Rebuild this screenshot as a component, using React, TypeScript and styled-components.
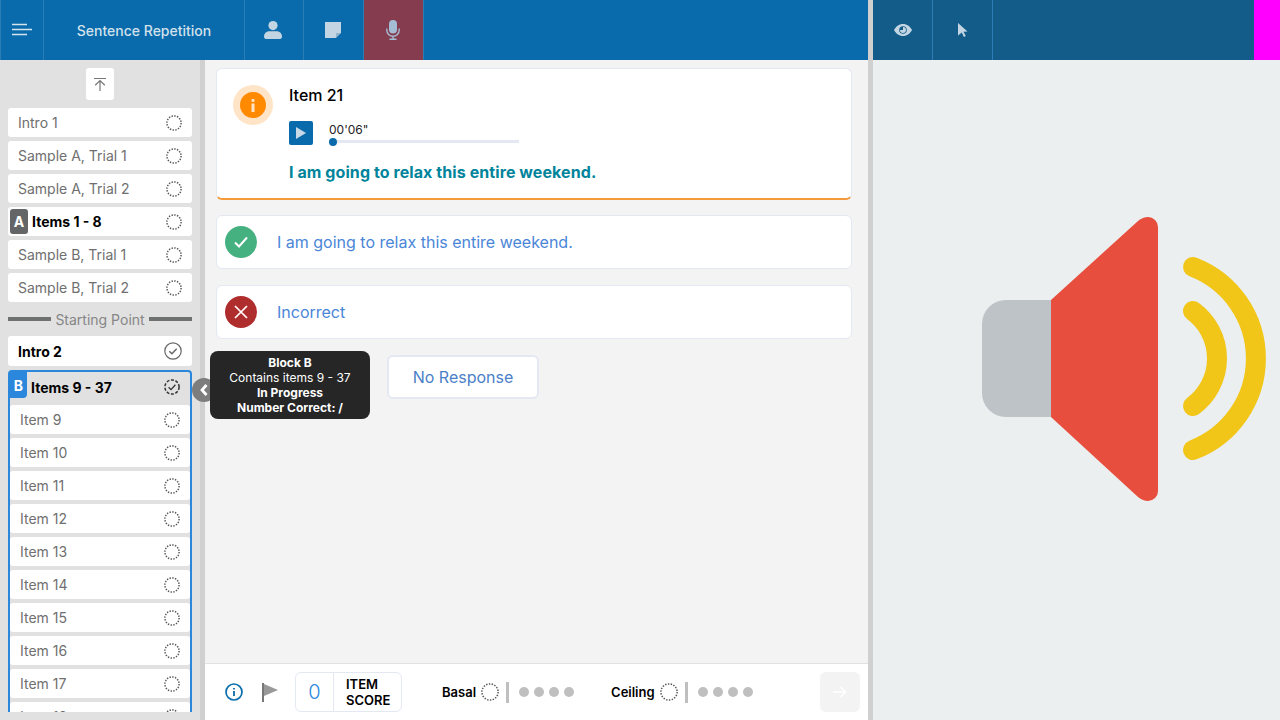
import React from 'react';
import styled, {createGlobalStyle} from 'styled-components';

const GlobalStyle = createGlobalStyle`
  html, body {
    margin: 0;
    padding: 0;
    height: 100%;
    overflow: hidden;
  }
  body {
    font-family: Inter, "Noto Sans", sans-serif;
  }
  #root {
    height: 100%;
  }
`;

const Ring = ({checked}: {checked?: 'done' | 'progress'}) => {
  if (checked === 'done') {
    return (
      <svg width="18" height="18" viewBox="0 0 18 18" fill="none">
        <circle cx="9" cy="9" r="8.2" stroke="#666" strokeWidth="1.2" />
        <path d="M5.3 9.2l2.6 2.6 4.8-5" stroke="#666" strokeWidth="1.4" />
      </svg>
    );
  }
  return (
    <svg width="16" height="16" viewBox="0 0 16 16" fill="none">
      <circle
        cx="8"
        cy="8"
        r="7.1"
        stroke={checked ? '#333' : '#555'}
        strokeWidth="1.5"
        strokeDasharray={checked ? '3 1.6' : '1.4 1.39'}
      />
      {checked && (
        <path d="M4.6 8.2l2.4 2.4 4.4-4.8" stroke="#333" strokeWidth="1.3" />
      )}
    </svg>
  );
};

const LargeRing = () => (
  <BigRing>
    <svg width="18" height="18" viewBox="0 0 18 18" fill="none">
      <circle
        cx="9"
        cy="9"
        r="8.1"
        stroke="#555"
        strokeWidth="1.5"
        strokeDasharray="1.4 1.43"
      />
    </svg>
  </BigRing>
);

export default function App() {
  const topRows = ['Intro 1', 'Sample A, Trial 1', 'Sample A, Trial 2'];
  const blockRows = ['Sample B, Trial 1', 'Sample B, Trial 2'];
  const items = [9, 10, 11, 12, 13, 14, 15, 16, 17, 18, 19];

  return (
    <Page>
      <GlobalStyle />
      <LeftPane>
        <TopBar>
          <MenuCell>
            <svg width="20" height="14" viewBox="0 0 20 14" fill="none">
              <path d="M0 1.5h15M0 6.5h20M0 11.5h15" stroke="#d5e3ee" strokeWidth="1.6" />
            </svg>
          </MenuCell>
          <TitleCell>Sentence Repetition</TitleCell>
          <IconCell $width={59}>
            <svg width="18" height="18" viewBox="0 0 18 18" fill="#c3d5e3">
              <circle cx="9" cy="4.6" r="4.6" />
              <path d="M0 15.5C0 12 3 10.2 5.5 10.2h7c2.5 0 5.500 1.800 5.500 5.300 0 1.400-.8 2.500-2 2.500H2c-1.200 0-2-1.100-2-2.500z" />
            </svg>
          </IconCell>
          <IconCell $width={60}>
            <svg width="16" height="16" viewBox="0 0 16 16">
              <path d="M0 0h16v10.500L10.500 16H0z" fill="#c3d5e3" />
              <path d="M11 16v-4a1 1 0 0 1 1-1h4z" fill="#8fb4cf" />
            </svg>
          </IconCell>
          <IconCell $width={60} $active>
            <svg width="14" height="20" viewBox="0 0 14 20" fill="none">
              <rect x="3" y="0" width="8" height="13.500" rx="4" fill="#a4bcd4" />
              <path d="M.8 8.500v1.500a6.200 6.200 0 0 0 12.400 0V8.500M7 16.200V19M3.500 19.300h7" stroke="#a4bcd4" strokeWidth="1.400" />
            </svg>
          </IconCell>
        </TopBar>
        <Body>
          <Sidebar>
            <Scroller>
              <ToTop>
                <svg width="14" height="14" viewBox="0 0 14 14" fill="none">
                  <path d="M1 1.500h12M7 14V3.500M2.200 8.200L7 3.500l4.800 4.700" stroke="#777" strokeWidth="1.200" />
                </svg>
              </ToTop>
              <RowList>
                {topRows.map(label => (
                  <Row key={label}>
                    <RowLabel>{label}</RowLabel>
                    <Ring />
                  </Row>
                ))}
                <Row $badged>
                  <BlockBadge>A</BlockBadge>
                  <RowLabel $strong>Items 1 - 8</RowLabel>
                  <Ring />
                </Row>
                {blockRows.map(label => (
                  <Row key={label}>
                    <RowLabel>{label}</RowLabel>
                    <Ring />
                  </Row>
                ))}
              </RowList>
              <Divider>
                <DividerLine />
                <span>Starting Point</span>
                <DividerLine />
              </Divider>
              <Row $tall>
                <RowLabel $strong>Intro 2</RowLabel>
                <Ring checked="done" />
              </Row>
              <Group>
                <GroupHeader>
                  <GroupBadge>B</GroupBadge>
                  <RowLabel $strong>Items 9 - 37</RowLabel>
                  <Ring checked="progress" />
                </GroupHeader>
                <RowList>
                  {items.map(n => (
                    <Row key={n}>
                      <RowLabel>Item {n}</RowLabel>
                      <Ring />
                    </Row>
                  ))}
                </RowList>
              </Group>
            </Scroller>
          </Sidebar>
          <Main>
            <Content>
              <Card>
                <InfoHalo>
                  <InfoDot>
                    <svg width="4" height="13" viewBox="0 0 4 13" fill="#ffe4c8">
                      <rect x="0.500" y="0" width="3" height="3" rx="1" />
                      <rect x="0.500" y="4.500" width="3" height="8.500" rx="0.500" />
                    </svg>
                  </InfoDot>
                </InfoHalo>
                <CardBody>
                  <ItemTitle>Item 21</ItemTitle>
                  <Player>
                    <PlayButton>
                      <svg width="10" height="12" viewBox="0 0 10 12" fill="#c9d8e6">
                        <path d="M0 0l10 6-10 6z" />
                      </svg>
                    </PlayButton>
                    <Timeline>
                      <TimeText>00'06"</TimeText>
                      <Track>
                        <Knob />
                      </Track>
                    </Timeline>
                  </Player>
                  <Sentence>I am going to relax this entire weekend.</Sentence>
                </CardBody>
              </Card>
              <ResponseList>
                <ResponseRow>
                  <ResponseIcon $color="#46b180">
                    <svg width="14" height="12" viewBox="0 0 14 12" fill="none">
                      <path d="M1 6.500l4 4 8-9" stroke="#fff" strokeWidth="2" />
                    </svg>
                  </ResponseIcon>
                  <ResponseText>I am going to relax this entire weekend.</ResponseText>
                </ResponseRow>
                <ResponseRow>
                  <ResponseIcon $color="#b02d2d">
                    <svg width="14" height="14" viewBox="0 0 14 14" fill="none">
                      <path d="M1 1l12 12M13 1L1 13" stroke="#fff" strokeWidth="1.700" />
                    </svg>
                  </ResponseIcon>
                  <ResponseText>Incorrect</ResponseText>
                </ResponseRow>
                <NoResponse>No Response</NoResponse>
              </ResponseList>
            </Content>
            <Footer>
              <svg width="18" height="18" viewBox="0 0 18 18" fill="none">
                <circle cx="9" cy="9" r="8" stroke="#0b6dab" strokeWidth="1.700" />
                <path d="M9 8v5M9 5v1.600" stroke="#0b6dab" strokeWidth="1.800" />
              </svg>
              <FlagIcon width="16" height="19" viewBox="0 0 16 19">
                <rect x="0" y="0" width="2" height="19" fill="#777" />
                <path d="M2 1l14 6-14 6z" fill="#999" />
              </FlagIcon>
              <ScoreBox>
                <ScoreValue>0</ScoreValue>
                <ScoreLabel>
                  ITEM
                  <br />
                  SCORE
                </ScoreLabel>
              </ScoreBox>
              <Meter $left={40}>
                <MeterLabel>Basal</MeterLabel>
                <LargeRing />
                <MeterBar />
                <Dots>
                  {[0, 1, 2, 3].map(n => (
                    <Dot key={n} />
                  ))}
                </Dots>
              </Meter>
              <Meter $left={37}>
                <MeterLabel>Ceiling</MeterLabel>
                <LargeRing />
                <MeterBar />
                <Dots>
                  {[0, 1, 2, 3].map(n => (
                    <Dot key={n} />
                  ))}
                </Dots>
              </Meter>
              <NextButton>
                <svg width="14" height="12" viewBox="0 0 14 12" fill="none">
                  <path d="M0 6h12.500M7.500 1l5 5-5 5" stroke="#fff" strokeWidth="1.400" />
                </svg>
              </NextButton>
            </Footer>
          </Main>
          <Handle>
            <svg width="8" height="12" viewBox="0 0 8 12" fill="none">
              <path d="M6.500 1L2 6l4.500 5" stroke="#fff" strokeWidth="2.800" />
            </svg>
          </Handle>
          <Tooltip>
            <strong>Block B</strong>
            <span>Contains items 9 - 37</span>
            <strong>In Progress</strong>
            <strong>Number Correct: /</strong>
          </Tooltip>
        </Body>
      </LeftPane>
      <Splitter />
      <RightPane>
        <RightBar>
          <RightCell>
            <svg width="18" height="12" viewBox="0 0 18 12">
              <path d="M9 0c4 0 7.300 2.600 9 6-1.700 3.400-5 6-9 6s-7.300-2.600-9-6c1.700-3.400 5-6 9-6z" fill="#c3d5e3" />
              <circle cx="9" cy="6" r="3.800" fill="#135c8a" />
              <path d="M9 3a3 3 0 1 1-3 3h3z" fill="#c3d5e3" />
            </svg>
          </RightCell>
          <RightCell>
            <svg width="10" height="14" viewBox="0 0 10 14" fill="#c3d5e3">
              <path d="M0 0l9.500 8.500-4 .2 2.300 4.200-1.900 1-2.100-4.300L0 12.500z" />
            </svg>
          </RightCell>
          <Magenta />
        </RightBar>
        <Stage>
          <svg width="320" height="320" viewBox="0 0 320 320" fill="none">
            <path d="M91 100H46a24 24 0 0 0-24 24v69a24 24 0 0 0 24 24h45z" fill="#bdc3c7" />
            <path d="M91 100l87-79q5-4 10-4a10 10 0 0 1 10 10v264a10 10 0 0 1-10 10q-5 0-10-4l-87-80z" fill="#e74e3d" />
            <path d="M233 67a98 98 0 0 1 0 183M233 111a59 59 0 0 1 0 95" stroke="#f1c618" strokeWidth="20" strokeLinecap="round" />
          </svg>
        </Stage>
      </RightPane>
    </Page>
  );
}

const Page = styled.div`
  display: flex;
  width: 1280px;
  height: 720px;
  overflow: hidden;
  background: #f3f3f3;
`;

const LeftPane = styled.div`
  display: flex;
  flex-direction: column;
  width: 868px;
  flex: none;
`;

const TopBar = styled.div`
  display: flex;
  height: 60px;
  flex: none;
  background: #096bab;
`;

const MenuCell = styled.div`
  display: flex;
  align-items: center;
  justify-content: center;
  width: 44px;
  box-sizing: border-box;
  border-left: 1px solid #2a7db5;
  border-right: 1px solid #2a7db5;
`;

const TitleCell = styled.div`
  display: flex;
  align-items: center;
  justify-content: center;
  width: 201px;
  box-sizing: border-box;
  border-right: 1px solid #2a7db5;
  color: #d2e1ec;
  font-size: 14px;
  font-weight: 500;
`;

const IconCell = styled.div<{$active?: boolean; $width: number}>`
  display: flex;
  align-items: center;
  justify-content: center;
  width: ${({$width}) => $width}px;
  box-sizing: border-box;
  padding-right: 2px;
  background: ${({$active}) => ($active ? '#853c4e' : 'transparent')};
  border-right: 1px solid #2a7db5;
`;

const Body = styled.div`
  position: relative;
  display: flex;
  flex: 1;
  min-height: 0;
`;

const Sidebar = styled.div`
  width: 200px;
  flex: none;
  padding-bottom: 8px;
  box-sizing: content-box;
  height: 652px;
  background: #e1e1e1;
  border-right: 5px solid #d0d0d0;
`;

const Scroller = styled.div`
  height: 100%;
  box-sizing: border-box;
  padding: 8px 8px 0;
  overflow: hidden;
`;

const ToTop = styled.div`
  display: flex;
  align-items: center;
  justify-content: center;
  width: 28px;
  height: 32px;
  margin: 0 auto 8px;
  background: #fff;
  border-radius: 3px;
`;

const RowList = styled.div`
  display: flex;
  flex-direction: column;
  gap: 4px;
`;

const Row = styled.div<{$badged?: boolean; $tall?: boolean}>`
  display: flex;
  align-items: center;
  gap: 4px;
  height: ${({$tall}) => ($tall ? 30 : 29)}px;
  flex: none;
  padding: 0 10px 0 ${({$badged}) => ($badged ? 2 : 10)}px;
  background: #fff;
  border-radius: 3px;
`;

const RowLabel = styled.span<{$strong?: boolean}>`
  flex: 1;
  color: ${({$strong}) => ($strong ? '#000' : '#6f6f6f')};
  font-size: 14px;
  font-weight: ${({$strong}) => ($strong ? 700 : 400)};
  white-space: nowrap;
`;

const BlockBadge = styled.span`
  display: flex;
  align-items: center;
  justify-content: center;
  width: 18px;
  height: 25px;
  background: #636566;
  border-radius: 3px;
  color: #fff;
  font-size: 14px;
  font-weight: 700;
`;

const Divider = styled.div`
  display: flex;
  align-items: center;
  gap: 4px;
  height: 34px;
  color: #868686;
  font-size: 14px;
  white-space: nowrap;
`;

const DividerLine = styled.i`
  flex: 1;
  height: 4px;
  background: #6f7170;
`;

const Group = styled.div`
  margin-top: 4px;
  border: 2px solid #2a87db;
  border-radius: 4px 4px 0 0;
  background: #e1e1e1;
`;

const GroupHeader = styled.div`
  display: flex;
  align-items: center;
  gap: 4px;
  height: 33px;
  box-sizing: border-box;
  padding: 0 10px 3px 0;
`;

const GroupBadge = styled.span`
  display: flex;
  align-items: center;
  justify-content: center;
  align-self: flex-start;
  width: 17px;
  height: 26px;
  background: #2a87db;
  border-radius: 0 0 4px 0;
  color: #fff;
  font-size: 14px;
  font-weight: 700;
`;

const Main = styled.div`
  display: flex;
  flex-direction: column;
  flex: 1;
  min-width: 0;
`;

const Content = styled.div`
  flex: 1;
  padding: 8px 16px 0 11px;
`;

const Card = styled.div`
  display: flex;
  gap: 16px;
  height: 132px;
  box-sizing: border-box;
  padding: 16px;
  background: #fff;
  border: 1px solid #e4e8f2;
  border-bottom: 2px solid #f59a3a;
  border-radius: 6px;
`;

const InfoHalo = styled.div`
  display: flex;
  align-items: center;
  justify-content: center;
  width: 40px;
  height: 40px;
  background: #ffe4c8;
  border-radius: 50%;
`;

const InfoDot = styled.div`
  display: flex;
  align-items: center;
  justify-content: center;
  width: 26px;
  height: 26px;
  background: #ff8a00;
  border-radius: 50%;
`;

const CardBody = styled.div`
  display: flex;
  flex-direction: column;
`;

const ItemTitle = styled.div`
  color: #000;
  font-size: 16px;
  font-weight: 500;
  line-height: 20px;
`;

const Player = styled.div`
  display: flex;
  gap: 16px;
  margin-top: 16px;
`;

const PlayButton = styled.div`
  display: flex;
  align-items: center;
  justify-content: center;
  width: 24px;
  height: 24px;
  background: #096bab;
  border-radius: 2px;
`;

const Timeline = styled.div`
  width: 190px;
  padding-top: 1px;
`;

const TimeText = styled.div`
  color: #222;
  font-size: 12px;
  line-height: 16px;
`;

const Track = styled.div`
  position: relative;
  height: 3px;
  margin-top: 2px;
  background: #e4e8f2;
`;

const Knob = styled.div`
  position: absolute;
  top: -2.5px;
  left: 0;
  width: 8px;
  height: 8px;
  background: #096bab;
  border-radius: 50%;
`;

const Sentence = styled.div`
  margin-top: 17px;
  color: #00849c;
  font-size: 16px;
  font-weight: 700;
  line-height: 20px;
  letter-spacing: 0.08px;
  white-space: nowrap;
`;

const ResponseList = styled.div`
  display: flex;
  flex-direction: column;
  align-items: stretch;
  gap: 16px;
  margin-top: 15px;
`;

const ResponseRow = styled.div`
  display: flex;
  align-items: center;
  gap: 20px;
  height: 54px;
  box-sizing: border-box;
  padding-left: 8px;
  background: #fff;
  border: 1px solid #e4e8f2;
  border-radius: 6px;
`;

const ResponseIcon = styled.div<{$color: string}>`
  display: flex;
  align-items: center;
  justify-content: center;
  width: 32px;
  height: 32px;
  background: ${({$color}) => $color};
  border-radius: 50%;
`;

const ResponseText = styled.span`
  color: #4a86d8;
  font-size: 16px;
`;

const NoResponse = styled.div`
  display: flex;
  align-items: center;
  justify-content: center;
  width: 152px;
  height: 44px;
  box-sizing: border-box;
  margin-left: 171px;
  background: #fff;
  border: 2px solid #e4e8f2;
  border-radius: 6px;
  color: #4a7fc8;
  font-size: 16px;
`;

const Footer = styled.div`
  display: flex;
  align-items: center;
  height: 56px;
  flex: none;
  padding: 0 8px 0 20px;
  background: #fff;
  border-top: 1px solid #e2e2e2;
`;

const FlagIcon = styled.svg`
  margin-left: 19px;
`;

const ScoreBox = styled.div`
  display: flex;
  height: 40px;
  box-sizing: border-box;
  width: 107px;
  margin-left: 17px;
  border: 1px solid #e4e8f2;
  border-radius: 6px;
`;

const ScoreValue = styled.div`
  display: flex;
  align-items: center;
  justify-content: center;
  width: 37px;
  border-right: 1px solid #e4e8f2;
  color: #2a87db;
  font-size: 20px;
  font-weight: 300;
`;

const ScoreLabel = styled.div`
  align-self: center;
  padding: 0 0 1px 12px;
  color: #000;
  font-size: 13px;
  font-weight: 600;
  line-height: 16px;
`;

const Meter = styled.div<{$left: number}>`
  display: flex;
  align-items: center;
  margin-left: ${({$left}) => $left}px;
`;

const MeterLabel = styled.span`
  color: #000;
  font-size: 13px;
  font-weight: 600;
`;

const BigRing = styled.span`
  display: flex;
  margin-left: 5px;
`;

const MeterBar = styled.i`
  width: 3px;
  height: 21px;
  margin: 0 10px 0 7px;
  background: #bfbfbf;
`;

const Dots = styled.div`
  display: flex;
  gap: 5px;
`;

const Dot = styled.i`
  width: 10px;
  height: 10px;
  background: #bfbfbf;
  border-radius: 50%;
`;

const NextButton = styled.div`
  display: flex;
  align-items: center;
  justify-content: center;
  width: 40px;
  height: 40px;
  margin-left: auto;
  background: #f3f3f3;
  border-radius: 6px;
`;

const Handle = styled.div`
  position: absolute;
  top: 318px;
  left: 192px;
  display: flex;
  align-items: center;
  justify-content: center;
  width: 24px;
  height: 24px;
  background: #7d7d7d;
  border-radius: 50%;
`;

const Tooltip = styled.div`
  position: absolute;
  top: 291px;
  left: 210px;
  display: flex;
  flex-direction: column;
  align-items: center;
  justify-content: center;
  width: 160px;
  height: 68px;
  background: #262626;
  border-radius: 8px;
  color: #fff;
  font-size: 12px;
  line-height: 15px;

  strong {
    font-weight: 700;
  }
`;

const Splitter = styled.div`
  width: 5px;
  flex: none;
  background: #d0d0d0;
`;

const RightPane = styled.div`
  display: flex;
  flex-direction: column;
  flex: 1;
  min-width: 0;
  background: #ebeff0;
`;

const RightBar = styled.div`
  display: flex;
  height: 60px;
  flex: none;
  background: #135c8a;
`;

const RightCell = styled.div`
  display: flex;
  align-items: center;
  justify-content: center;
  width: 60px;
  box-sizing: border-box;
  border-right: 1px solid #2a7db5;
`;

const Magenta = styled.div`
  width: 26px;
  margin-left: auto;
  background: #ff00ff;
`;

const Stage = styled.div`
  flex: 1;
  padding: 140px 0 0 87px;
`;
